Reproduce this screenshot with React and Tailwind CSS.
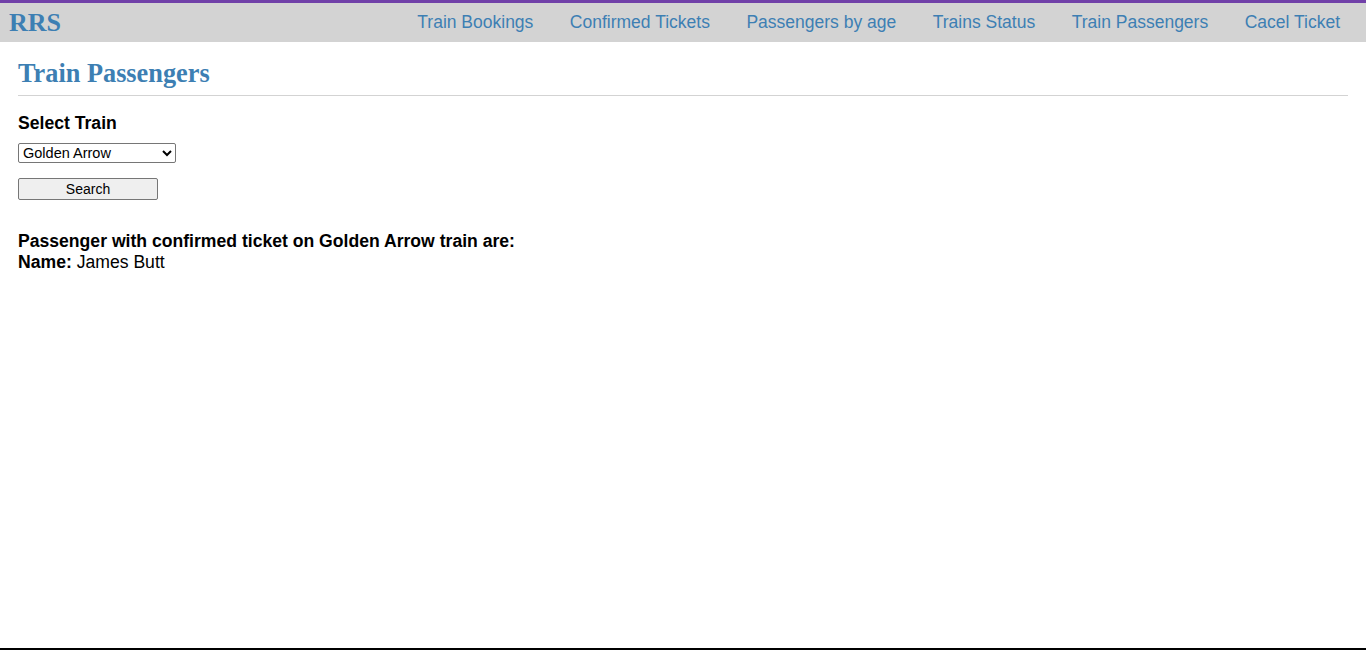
import React, { useState } from 'react';

const links = [
  'Train Bookings',
  'Confirmed Tickets',
  'Passengers by age',
  'Trains Status',
  'Train Passengers',
  'Cacel Ticket',
];

const App = () => {
  const [train, setTrain] = useState('Golden Arrow');

  return (
    <div className="flex h-[650px] flex-col border-t-[3px] border-b-2 border-t-[#7040a8] border-b-black bg-white font-['Liberation_Sans',Arial,sans-serif]">
      {/* Top bar */}
      <nav className="flex h-[39px] items-center justify-between bg-[#d3d3d3] pl-[9px] pr-[26px]">
        <span className="font-['Liberation_Serif','Times_New_Roman',serif] text-[26px] font-bold text-[#3d7fb3]">
          RRS
        </span>
        <div className="flex items-center gap-[36.5px]">
          {links.map((name) => (
            <a key={name} href="#" className="text-[17.5px] text-[#3d7fb3]">
              {name}
            </a>
          ))}
        </div>
      </nav>

      {/* Content */}
      <main className="flex-1 px-[18px]">
        <h2 className="mt-[17px] border-b border-[#d3d3d3] pb-[6px] font-['Liberation_Serif','Times_New_Roman',serif] text-[26.3px] font-bold leading-[30px] text-[#3d7fb3]">
          Train Passengers
        </h2>

        <div className="mt-[17px] text-[17.6px] font-bold leading-[21px] text-black">Select Train</div>

        <select
          value={train}
          onChange={(e) => setTrain(e.target.value)}
          className="mt-[9px] block h-[20px] w-[158px] rounded-[2px] border border-[#767676] bg-white pl-0 text-[14.5px] text-black"
        >
          <option>Golden Arrow</option>
          <option>Flying Scotsman</option>
          <option>Orient Express</option>
        </select>

        <button className="mt-[15px] block h-[22px] w-[140px] rounded-[2px] border border-[#767676] bg-[#efefef] text-[14px] text-black">
          Search
        </button>

        <div className="mt-[31px] text-[17.6px] leading-[21px] text-black">
          <div className="font-bold">Passenger with confirmed ticket on Golden Arrow train are:</div>
          <div>
            <span className="font-bold">Name:</span> James Butt
          </div>
        </div>
      </main>
    </div>
  );
};

export default App;
